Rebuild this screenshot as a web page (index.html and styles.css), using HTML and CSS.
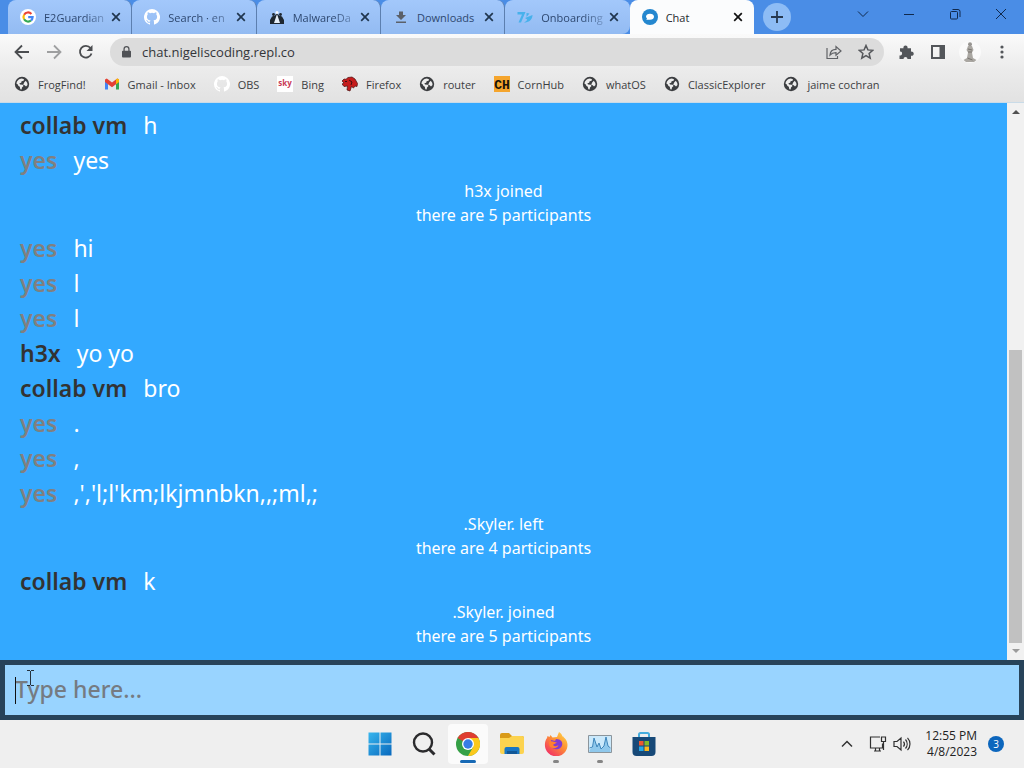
FILE: index.html
```
<!DOCTYPE html>
<html lang="en">
<head>
<meta charset="utf-8">
<title>Chat</title>
<link rel="stylesheet" href="styles.css">
</head>
<body>
<svg class="defs" aria-hidden="true">
  <symbol id="globe" viewBox="0 0 16 16"><circle cx="8" cy="8" r="7.200" fill="#3c3e41"/><path d="M2.500 7.800C2.600 5 4.800 2.700 7.800 2.500L10 3.300 9.600 4.800 7.600 5.200 7.200 6.800 5.400 7.300 6 8.600 8.800 8.800 9.500 10 8 11.500 7.600 13.400 6.300 13.200 5.800 10.800 4.500 10 3.600 8.200zM10.300 6.300l1.500-1.600L13.300 7l.2 2-1.500 1.500-1.300-1.200-1.500-.6z" fill="#ededed"/></symbol>
  <symbol id="github" viewBox="0 0 16 16"><path fill="currentColor" d="M8 0a8 8 0 0 0-2.530 15.590c.4.070.55-.17.550-.38v-1.490c-2.230.48-2.700-.95-2.700-.95-.36-.92-.89-1.170-.89-1.170-.72-.5.060-.48.060-.48.800.05 1.230.82 1.230.82.710 1.220 1.870.87 2.330.66.070-.52.280-.87.500-1.070-1.770-.2-3.640-.89-3.640-3.950 0-.87.310-1.590.82-2.150-.08-.2-.36-1.020.08-2.120 0 0 .67-.21 2.200.82a7.600 7.600 0 0 1 4 0c1.530-1.040 2.200-.82 2.200-.82.440 1.100.16 1.920.08 2.120.51.56.82 1.270.82 2.150 0 3.070-1.870 3.750-3.650 3.950.29.25.54.73.54 1.480v2.200c0 .21.150.46.550.38A8 8 0 0 0 8 0z"/></symbol>
  <symbol id="close" viewBox="0 0 10 10"><path d="M1.200 1.200l7.600 7.600M8.800 1.200 1.200 8.800" stroke="currentColor" stroke-width="1.700" fill="none"/></symbol>
</svg>

<header class="browser">
  <div class="tabstrip">
    <div class="tabs" role="tablist">
      <div class="tab" role="tab">
        <svg class="favicon" viewBox="0 0 16 16"><circle cx="8" cy="8" r="8" fill="#fff"/><g fill="none" stroke-width="2.200"><path d="M4.100 5.700A4.600 4.600 0 0 1 11.400 4.900" stroke="#ea4335"/><path d="M4.100 10.300a4.600 4.600 0 0 1 0-4.600" stroke="#fbbc05"/><path d="M11 11.500a4.600 4.600 0 0 1-6.900-1.200" stroke="#34a853"/><path d="M8.200 8.200h4.400a4.600 4.600 0 0 1-1.600 3.300" stroke="#4285f4"/></g></svg>
        <span class="tab-title faded">E2Guardian</span>
        <button class="tab-close" aria-label="Close tab"><svg><use href="#close"/></svg></button>
      </div>
      <div class="tab" role="tab">
        <svg class="favicon white"><use href="#github"/></svg>
        <span class="tab-title faded">Search · en</span>
        <button class="tab-close" aria-label="Close tab"><svg><use href="#close"/></svg></button>
      </div>
      <div class="tab" role="tab">
        <svg class="favicon" viewBox="0 0 16 16"><path d="M1 15V11l2-3.500 3-1 2-3 2 3 3 1 2 3.500v4z" fill="#1e2730"/><path d="M7 8l1-3 1 3 2 6H5z" fill="#e5eef8"/><circle cx="4.500" cy="5.500" r="1.400" fill="#1e2730"/><circle cx="11.500" cy="5.500" r="1.400" fill="#1e2730"/><circle cx="8" cy="3.500" r="1.500" fill="#f4f8ff"/></svg>
        <span class="tab-title faded">MalwareDa</span>
        <button class="tab-close" aria-label="Close tab"><svg><use href="#close"/></svg></button>
      </div>
      <div class="tab" role="tab">
        <svg class="favicon" viewBox="0 0 16 16"><path d="M6 2.500h4V6h3l-5 5-5-5h3zM3 12.500h10V14H3z" fill="#5b6069"/></svg>
        <span class="tab-title">Downloads</span>
        <button class="tab-close" aria-label="Close tab"><svg><use href="#close"/></svg></button>
      </div>
      <div class="tab" role="tab">
        <svg class="favicon" viewBox="0 0 16 16"><path d="M.5 3h8L4 13.500H1.500L5 5.500H.5zM9.500 4l3 .5L9.500 8zM8 9l7.500-3c0 5-4 7.500-8.500 7.500 2-1 3-2 3.200-3z" fill="#47b1ec"/></svg>
        <span class="tab-title faded">Onboarding</span>
        <button class="tab-close" aria-label="Close tab"><svg><use href="#close"/></svg></button>
      </div>
      <div class="tab active" role="tab" aria-selected="true">
        <svg class="favicon" viewBox="0 0 16 16"><circle cx="8" cy="8" r="8" fill="#2487cf"/><path d="M8 4.700c2.400 0 4 1.300 4 3s-1.600 3.100-4 3.100H4.300l.7-1.500C4.300 8.800 4 8.300 4 7.700c0-1.700 1.600-3 4-3z" fill="#fff"/></svg>
        <span class="tab-title">Chat</span>
        <button class="tab-close" aria-label="Close tab"><svg><use href="#close"/></svg></button>
      </div>
    </div>
    <button class="new-tab" aria-label="New tab"><svg viewBox="0 0 12 12"><path d="M6 0v12M0 6h12" stroke="#26384f" stroke-width="1.800"/></svg></button>
    <div class="window-buttons">
      <button aria-label="Search tabs"><svg viewBox="0 0 12 12"><path d="M1 3.500l5 5 5-5"/></svg></button>
      <button aria-label="Minimize"><svg viewBox="0 0 12 12"><path d="M1 6.500h10"/></svg></button>
      <button aria-label="Restore"><svg viewBox="0 0 12 12"><rect x="1.500" y="3.500" width="7" height="7.500" rx="1"/><path d="M3.500 1.500h5.500a2 2 0 0 1 2 2V9"/></svg></button>
      <button aria-label="Close window"><svg viewBox="0 0 12 12"><path d="M1 1l10 10M11 1 1 11"/></svg></button>
    </div>
  </div>

  <nav class="toolbar">
    <button class="nav-button" aria-label="Back"><svg viewBox="0 0 16 16"><path d="M15 8H2M8 1.500 1.500 8 8 14.500"/></svg></button>
    <button class="nav-button dim" aria-label="Forward"><svg viewBox="0 0 16 16"><path d="M1 8h13M8 1.500 14.500 8 8 14.500"/></svg></button>
    <button class="nav-button" aria-label="Reload"><svg viewBox="0 0 16 16"><path d="M13.500 9.500A5.900 5.900 0 1 1 12.500 4"/><path d="M14.500 1v6h-6z" fill="#4b4d50" stroke="none"/></svg></button>
    <div class="omnibox">
      <svg class="lock" viewBox="0 0 10 14"><path d="M1 5.500h8a1 1 0 0 1 1 1V12a1 1 0 0 1-1 1H1a1 1 0 0 1-1-1V6.500a1 1 0 0 1 1-1z" fill="#505256"/><path d="M2.300 6V3.700a2.700 2.700 0 0 1 5.400 0V6" fill="none" stroke="#505256" stroke-width="1.400"/></svg>
      <input class="address" type="text" aria-label="Address" value="chat.nigeliscoding.repl.co">
      <button class="small-button" aria-label="Share"><svg viewBox="0 0 16 16"><path d="M1 4v10.500h10.500V12M4 11c.3-4 2.500-5.700 6-5.700V2.500l5 4.500-5 4.300V8.600C7 8.600 5.500 9.300 4 11z" fill="none" stroke="#606266" stroke-width="1.200"/></svg></button>
      <button class="small-button" aria-label="Bookmark this tab"><svg viewBox="0 0 16 16"><path d="M8 1.500l1.900 4.400 4.800.4-3.600 3.200 1.100 4.700L8 11.700l-4.200 2.500 1.100-4.700-3.600-3.200 4.800-.4z" fill="none" stroke="#55575b" stroke-width="1.500"/></svg></button>
    </div>
    <div class="extensions">
      <button class="small-button" aria-label="Extensions"><svg viewBox="0 0 16 16"><path d="M2 4.200h3.500a2.100 2.100 0 1 1 4 0H13v3.500a2.100 2.100 0 1 1 0 4V15H9.500a2 2 0 1 0-4 0H1.500v-3.600a2 2 0 1 0 .5-3.900z" fill="#53565a"/></svg></button>
      <button class="small-button" aria-label="Side panel"><svg viewBox="0 0 16 16"><path d="M1 1h14v14H1zM3 3v10h6.500V3z" fill="#53565a" fill-rule="evenodd"/></svg></button>
      <button class="small-button avatar" aria-label="Profile"><svg viewBox="0 0 22 22"><circle cx="11" cy="11" r="11" fill="#fafafa"/><circle cx="11" cy="3.300" r="2" fill="#989591"/><path d="M9 5h4l1.500 4-1.500 2.500 1 5.500 3.500 2-2.500 2H7l-2.500-2L8 17l1-5.500L7.500 9z" fill="#aaa7a2"/><path d="M9 8l4 1M9 11h4M8.500 17l5 2" stroke="#77736f"/></svg></button>
      <button class="small-button" aria-label="Menu"><svg viewBox="0 0 16 16" fill="#53565a"><circle cx="8" cy="3" r="1.600"/><circle cx="8" cy="8" r="1.600"/><circle cx="8" cy="13" r="1.600"/></svg></button>
    </div>
  </nav>

  <nav class="bookmarks" aria-label="Bookmarks">
    <a href="#"><svg><use href="#globe"/></svg>FrogFind!</a>
    <a href="#"><svg viewBox="0 0 16 16"><path d="M1 4v9.500h3V8z" fill="#4285f4"/><path d="M15 4v9.500h-3V8z" fill="#34a853"/><path d="M1 3.500 2.800 2.500 8 6.500l5.200-4 1.800 1V6L8 11.300 1 6z" fill="#e44134"/><path d="M12 3.400l1.500-1L15 3.500V6l-3 2.200z" fill="#fbbc04"/></svg>Gmail - Inbox</a>
    <a href="#"><svg class="white"><use href="#github"/></svg>OBS</a>
    <a href="#"><svg viewBox="0 0 16 16"><path d="M0 0h16v16H0z" fill="#fff"/><text class="sky" x="8" y="10" text-anchor="middle">sky</text></svg>Bing</a>
    <a href="#"><svg viewBox="0 0 16 16"><path d="M0 5l2-2 2 .3L6 1.500l4-.5 3 2 2.500 4.500-.5 3-2-.5-1.500 2-2-1.500L8 15l-3-1 .5-4L2 10.500 0 8l2-1z" fill="#c51c1c" stroke="#4a1010" stroke-width=".7"/><path d="M3 5.500h2M7 4l3 2-1 3" stroke="#401010" fill="none"/></svg>Firefox</a>
    <a href="#"><svg><use href="#globe"/></svg>router</a>
    <a href="#"><svg viewBox="0 0 16 16"><path d="M0 0h16v16H0z" fill="#f5a52d"/><text class="ch" x="8" y="13" text-anchor="middle">CH</text></svg>CornHub</a>
    <a href="#"><svg><use href="#globe"/></svg>whatOS</a>
    <a href="#"><svg><use href="#globe"/></svg>ClassicExplorer</a>
    <a href="#"><svg><use href="#globe"/></svg>jaime cochran</a>
  </nav>
</header>

<main class="chat">
  <div class="viewport">
    <section class="messages" aria-label="Messages">
      <p class="message"><b class="dark">collab vm</b><span>h</span></p>
      <p class="message"><b>yes</b><span>yes</span></p>
      <p class="notice">h3x joined<br>there are 5 participants</p>
      <p class="message"><b>yes</b><span>hi</span></p>
      <p class="message"><b>yes</b><span>l</span></p>
      <p class="message"><b>yes</b><span>l</span></p>
      <p class="message"><b class="dark">h3x</b><span>yo yo</span></p>
      <p class="message"><b class="dark">collab vm</b><span>bro</span></p>
      <p class="message"><b>yes</b><span>.</span></p>
      <p class="message"><b>yes</b><span>,</span></p>
      <p class="message"><b>yes</b><span>,','l;l'km;lkjmnbkn,,;ml,;</span></p>
      <p class="notice">.Skyler. left<br>there are 4 participants</p>
      <p class="message"><b class="dark">collab vm</b><span>k</span></p>
      <p class="notice">.Skyler. joined<br>there are 5 participants</p>
    </section>
    <div class="scrollbar" aria-hidden="true">
      <svg viewBox="0 0 8 4"><path d="M0 4l4-4 4 4z" fill="#505050"/></svg>
      <div class="track"><div class="thumb"></div></div>
      <svg viewBox="0 0 8 4"><path d="M0 0l4 4 4-4z" fill="#9b9b9b"/></svg>
    </div>
  </div>
  <form class="composer">
    <input class="entry" type="text" placeholder="Type here..." aria-label="Message">
    <span class="caret"></span>
    <svg class="pointer" viewBox="0 0 7 16"><path d="M0 .5h3M4 .5h3M3.500 1v14M0 15.500h3M4 15.500h3" stroke="#26323c"/></svg>
  </form>
</main>

<footer class="taskbar">
  <span class="side"></span>
  <div class="apps">
    <button aria-label="Start"><svg viewBox="0 0 24 24"><defs><linearGradient id="win" x2="1" y2="1"><stop stop-color="#38b6ee"/><stop offset="1" stop-color="#0868bd"/></linearGradient></defs><path d="M.5.500h11v11H.500zM12.500.500h11v11h-11zM.500 12.500h11v11H.500zM12.500 12.500h11v11h-11z" fill="url(#win)"/></svg></button>
    <button aria-label="Search"><svg viewBox="0 0 24 24" fill="none" stroke="#2b2b2d"><circle cx="11" cy="10.500" r="9" stroke-width="2.400"/><path d="M17 17l5.500 5.500" stroke-width="3"/></svg></button>
    <button class="current" aria-label="Chrome"><svg viewBox="0 0 24 24"><circle cx="12" cy="12" r="12" fill="#35a046"/><path d="M12 12 1.600 6A12 12 0 0 1 22.400 6z" fill="#df3d31"/><path d="M22.400 6A12 12 0 0 1 12 24l5.200-9L12 6z" fill="#fbc81b"/><circle cx="12" cy="12" r="6" fill="#fff"/><circle cx="12" cy="12" r="4.700" fill="#377de5"/></svg></button>
    <button aria-label="File Explorer"><svg viewBox="0 0 24 24"><path d="M0 3a2 2 0 0 1 2-2h7l3 3h10a2 2 0 0 1 2 2v4H0z" fill="#d99a18"/><path d="M0 6h9l3-2h10a2 2 0 0 1 2 2v14a2 2 0 0 1-2 2H2a2 2 0 0 1-2-2z" fill="#fcd34f"/><path d="M4.500 22v-5a2 2 0 0 1 2-2h11a2 2 0 0 1 2 2v5z" fill="#1976c4"/><path d="M7 19h10v3H7z" fill="#115797"/></svg></button>
    <button class="running" aria-label="Firefox"><svg viewBox="0 0 24 24"><defs><linearGradient id="fox" x1="1" x2=".2" y2="1"><stop stop-color="#ffe14d"/><stop offset=".45" stop-color="#ff9433"/><stop offset="1" stop-color="#f12c67"/></linearGradient></defs><path d="M15 0c2 1 3 3 3.500 4.500 1-.3 1 .5 2 1.500 2 2 3 4.500 3 7a11.300 11.300 0 0 1-22.600 0c0-3 .6-5 2.100-7L3.500 4l2 1 1-2 2 2.500L13 5z" fill="url(#fox)"/><path d="M7 8l4 1 1-2c5 0 7 3 6 6.500-1 3-4 4.500-7 3.500-3-.8-5-3-4-6z" fill="#823bd0"/><path d="M5 10c4-2 5 1 8 0-1 2-3 1.500-4 3 2 2 4 1 5.500 0-1 4-7 4-9 1z" fill="#ff812e"/></svg></button>
    <button class="running" aria-label="Task Manager"><svg viewBox="0 0 24 24"><path d="M.500 3.500h23v17H.500z" fill="#cbe9fb" stroke="#8b959c"/><path d="M1.500 18l3-3L6 6l3 8 2-3 2 6 3-3 2-9 2 9 2.500 3V20h-21z" fill="#8fc8ec"/><path d="M1.500 16 4.500 15 6 6l3 9 2-4 2 6 3-3 2-9 2 9 2.500 2" fill="none" stroke="#3f86bb"/></svg></button>
    <button aria-label="Microsoft Store"><svg viewBox="0 0 24 24"><path d="M7 6V2.500a1.500 1.500 0 0 1 1.500-1.500h7A1.500 1.500 0 0 1 17 2.500V6" fill="none" stroke="#46adde" stroke-width="2"/><path d="M.500 5h23v15a4 4 0 0 1-4 4h-15a4 4 0 0 1-4-4z" fill="#174978"/><path d="M7 9h4.500v4.500H7z" fill="#ee5730"/><path d="M12.500 9H17v4.500h-4.500z" fill="#82ba28"/><path d="M7 14.500h4.500V19H7z" fill="#25a7e6"/><path d="M12.500 14.500H17V19h-4.500z" fill="#fcb91d"/></svg></button>
  </div>
  <div class="side tray">
    <svg class="chevron" viewBox="0 0 12 12"><path d="M1 8.500l5-5 5 5" fill="none" stroke="#333" stroke-width="1.500"/></svg>
    <svg class="tray-icon" viewBox="0 0 18 18"><path d="M11 2H1.500v11h12V8.500M5 16h7M6.500 13v3M10.500 13v3M12.500 2h4v4.500h-4zM14.500 6.500V15" fill="none" stroke="#303030" stroke-width="1.200"/></svg>
    <svg class="tray-icon" viewBox="0 0 18 18"><path d="M1 6.500h3L8 3v12l-4-3.500H1zM10.500 6.500a4 4 0 0 1 0 5M12.500 4.500a7 7 0 0 1 0 9M14.500 2.800a9 9 0 0 1 0 12.400" fill="none" stroke="#303030" stroke-width="1.200"/></svg>
    <div class="clock"><time>12:55 PM</time><time>4/8/2023</time></div>
    <span class="count">3</span>
  </div>
</footer>
</body>
</html>
```
FILE: styles.css
```
* { box-sizing: border-box; }

body {
  margin: 0;
  height: 100vh;
  display: flex;
  flex-direction: column;
  overflow: hidden;
  font-family: "Open Sans", "Noto Sans", sans-serif;
  font-size: 11px;
  color: #3c3e42;
}

button { border: 0; padding: 0; background: none; font: inherit; color: inherit; display: grid; place-items: center; }
.defs { position: absolute; width: 0; height: 0; }
.white { color: #fff; }

/* Tab strip */
.tabstrip { display: flex; align-items: center; height: 34px; padding-left: 8px; background: #4a8de6; }
.tabs { display: flex; flex: 0 1 746px; align-self: stretch; min-width: 0; }
.tab {
  flex: 1 1 0;
  min-width: 0;
  display: flex;
  align-items: center;
  padding: 0 10px 0 12px;
  background: linear-gradient(#a3c8fb, #93bbf2);
  border-radius: 8px 8px 0 0;
  border-right: 1px solid #5c7faf;
  color: #2e4870;
}
.tab:nth-child(5) { border-right-color: transparent; border-bottom-right-radius: 8px; }
.tab.active { background: #fbfcfd; border-right-color: transparent; color: #25282c; }
.favicon { width: 16px; height: 16px; flex: none; margin-right: 8px; }
.tab-title { flex: 1; white-space: nowrap; }
.tab-title.faded { mask-image: linear-gradient(to right, #000 60%, rgba(0, 0, 0, 0.15)); }
.tab-close { color: #20364f; }
.tab-close svg { width: 10px; height: 10px; }
.active .tab-close { color: #111; }
.new-tab { width: 28px; height: 28px; margin-left: 9px; border-radius: 50%; background: #8dbcf5; }
.new-tab svg { width: 12px; height: 12px; }
.window-buttons { display: flex; margin-left: auto; height: 28px; align-self: flex-start; }
.window-buttons button { width: 46px; }
.window-buttons svg { width: 12px; height: 12px; fill: none; stroke: #10294d; stroke-width: 1; }

/* Toolbar */
.toolbar { display: flex; align-items: center; height: 36px; padding: 0 14px; background: linear-gradient(#fafafa, #ebebeb); }
.nav-button { width: 16px; height: 16px; margin-right: 16px; }
.nav-button svg { width: 16px; height: 16px; fill: none; stroke: #4b4d50; stroke-width: 1.8; }
.nav-button.dim { opacity: 0.5; }
.omnibox { flex: 1; display: flex; align-items: center; gap: 16px; height: 28px; padding: 0 10px 0 12px; border-radius: 14px; background: #dcdcdc; }
.lock { width: 9px; height: 14px; }
.address { flex: 1; min-width: 0; margin-left: -5px; border: 0; padding: 0; background: none; font: 13px "Open Sans", sans-serif; color: #333539; }
.small-button, .small-button svg { width: 16px; height: 16px; }
.extensions { display: flex; align-items: center; gap: 16px; margin-left: 14px; }
.small-button.avatar, .avatar svg { width: 22px; height: 22px; }
.extensions .avatar { margin: 0 -3px; }

/* Bookmarks */
.bookmarks { display: flex; align-items: center; gap: 18px; height: 33px; padding: 0 14px 4px; background: linear-gradient(#ebebeb, #e2e2e2); border-bottom: 1px solid #c9dbe8; }
.bookmarks a { display: flex; align-items: center; gap: 8px; color: inherit; text-decoration: none; white-space: nowrap; }
.bookmarks svg { width: 16px; height: 16px; }
.sky { font: bold 8px "Open Sans", sans-serif; fill: #c93b57; }
.ch { font: bold 13px "Liberation Mono", monospace; fill: #17120a; }

/* Chat */
.chat { flex: 1; min-height: 0; display: flex; flex-direction: column; font-family: "Noto Sans", sans-serif; }
.viewport { flex: 1; min-height: 0; display: flex; background: #33a9ff; }
.messages { flex: 1; padding: 5px 0 0; color: #fff; overflow: hidden; }
.message { display: flex; gap: 16px; margin: 0; padding: 0 20px 1px; font-size: 23px; line-height: 34px; }
.message b { font-weight: 600; color: #808080; }
.message .dark { color: #333; }
.notice { margin: 0; padding: 1px 0 4px; font-size: 16px; line-height: 24px; text-align: center; }
.scrollbar { width: 17px; display: flex; flex-direction: column; align-items: center; gap: 6px; padding: 7px 2px; background: #f1f1f1; }
.scrollbar svg { width: 8px; height: 4px; flex: none; }
.track { flex: 1; align-self: stretch; display: flex; align-items: flex-end; }
.thumb { width: 100%; height: 56%; background: #c1c1c1; }

.composer { position: relative; display: flex; height: 60px; border: 5px solid #27435a; background: #99d4ff; }
.entry { flex: 1; min-width: 0; border: 0; padding: 0 10px 2px; background: none; font: 500 23px "Noto Sans", sans-serif; outline: 0; }
.entry::placeholder { color: #757b82; opacity: 1; }
.caret { position: absolute; left: 10px; top: 12px; width: 1px; height: 27px; background: #111; }
.pointer { position: absolute; left: 22px; top: 5px; width: 7px; height: 16px; }

/* Taskbar */
.taskbar { display: flex; align-items: center; height: 48px; background: #efefef; color: #222; }
.side { flex: 1 1 0; padding: 0 20px; }
.apps { display: flex; gap: 4px; }
.apps button { position: relative; width: 40px; height: 40px; border-radius: 4px; }
.apps svg { width: 24px; height: 24px; }
.apps .current { background: #fbfbfb; }
.running::after, .current::after { content: ""; position: absolute; bottom: 1px; left: 50%; transform: translateX(-50%); width: 6px; height: 3px; border-radius: 2px; background: #858585; }
.current::after { width: 16px; background: #1769b5; }
.tray { display: flex; align-items: center; justify-content: flex-end; gap: 6px; }
.chevron { width: 12px; height: 12px; margin-right: 10px; }
.tray-icon { width: 18px; height: 18px; }
.clock { display: flex; flex-direction: column; align-items: flex-end; margin: 0 5px 0 8px; font-size: 12px; line-height: 16px; }
.count { width: 16px; height: 16px; border-radius: 50%; background: #0c66bd; color: #fff; font-size: 10px; line-height: 16px; text-align: center; }
```
